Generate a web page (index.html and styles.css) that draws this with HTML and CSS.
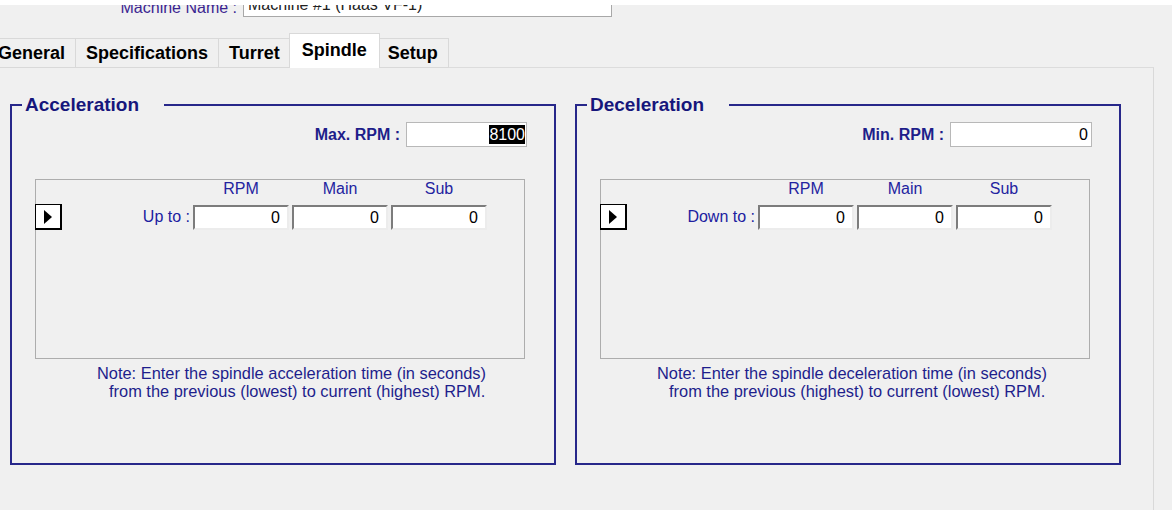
FILE: index.html
```html
<!DOCTYPE html>
<html>
<head>
<meta charset="utf-8">
<link rel="stylesheet" href="styles.css">
</head>
<body>
<div class="window">
  <div class="header">
    <span class="hdr-label">Machine Name :</span>
    <div class="hdr-input">Machine #1 (Haas VF-1)</div>
  </div>
  <div class="tabs">
    <div class="tab first">General</div>
    <div class="tab">Specifications</div>
    <div class="tab">Turret</div>
    <div class="tab active">Spindle</div>
    <div class="tab">Setup</div>
  </div>
  <div class="panel">
    <fieldset class="frame">
      <legend>Acceleration</legend>
      <div class="limit-row">
        <span class="limit-label">Max. RPM :</span>
        <div class="limit-input max"><span class="sel">8100</span></div>
      </div>
      <div class="table">
        <div class="col-head c3">RPM</div>
        <div class="col-head c4">Main</div>
        <div class="col-head c5">Sub</div>
        <div class="rowsel"><svg width="8" height="14" viewBox="0 0 8 14"><polygon points="0,0 8,7 0,14" fill="#000"/></svg></div>
        <div class="row-label">Up to :</div>
        <div class="cell">0</div>
        <div class="cell">0</div>
        <div class="cell">0</div>
      </div>
      <div class="note acc">
        <div>Note: Enter the spindle acceleration time (in seconds)</div>
        <div class="indent">from the previous (lowest) to current (highest) RPM.</div>
      </div>
    </fieldset>
    <fieldset class="frame">
      <legend>Deceleration</legend>
      <div class="limit-row">
        <span class="limit-label">Min. RPM :</span>
        <div class="limit-input min">0</div>
      </div>
      <div class="table">
        <div class="col-head c3">RPM</div>
        <div class="col-head c4">Main</div>
        <div class="col-head c5">Sub</div>
        <div class="rowsel"><svg width="8" height="14" viewBox="0 0 8 14"><polygon points="0,0 8,7 0,14" fill="#000"/></svg></div>
        <div class="row-label">Down to :</div>
        <div class="cell">0</div>
        <div class="cell">0</div>
        <div class="cell">0</div>
      </div>
      <div class="note dec">
        <div>Note: Enter the spindle deceleration time (in seconds)</div>
        <div class="indent">from the previous (highest) to current (lowest) RPM.</div>
      </div>
    </fieldset>
  </div>
</div>
</body>
</html>
```
FILE: styles.css
```css
* { box-sizing: border-box; }
html, body { margin: 0; padding: 0; background: #ffffff; }
body { font-family: "Liberation Sans", Arial, sans-serif; font-size: 16px; }

.window {
  margin-top: 5px;
  width: 1172px;
  height: 505px;
  background: #f0f0f0;
  overflow: hidden;
}

.header {
  display: flex;
  align-items: flex-end;
  margin-top: -12px;
  height: 24px;
}
.hdr-label {
  width: 237px;
  text-align: right;
  color: #3b2590;
  font-size: 16px;
  line-height: 18px;
  margin-right: 6px;
}
.hdr-input {
  width: 369px;
  height: 24px;
  background: #fff;
  border: 1px solid #a8a8a8;
  border-top: none;
  padding: 3px 0 0 4px;
  font-size: 16px;
  line-height: 18px;
  color: #222;
}

.tabs {
  display: flex;
  align-items: flex-end;
  height: 34px;
  margin-top: 17px;
  margin-left: -13px;
}
.tab {
  height: 30px;
  padding: 0 10px;
  border: 1px solid #d9d9d9;
  border-left: none;
  background: #f0f0f0;
  font-weight: bold;
  font-size: 18px;
  line-height: 28px;
  color: #000;
}
.tab.first { border-left: 1px solid #d9d9d9; }
.tab.active {
  position: relative;
  z-index: 1;
  height: 35px;
  margin: 0 -2px;
  padding: 2px 12px 0;
  background: #fff;
  border-left: 1px solid #d9d9d9;
  border-bottom: none;
  line-height: 28px;
}

.panel {
  margin-top: -1px;
  width: 1154px;
  height: 444px;
  border-top: 1px solid #dcdcdc;
  border-right: 1px solid #d9d9d9;
  padding: 26px 0 0 10px;
  display: flex;
  gap: 19px;
  align-items: flex-start;
}

.frame {
  margin: 0;
  padding: 0;
  width: 546px;
  height: 371px;
  border: 2px solid #27278a;
  min-width: 0;
}
.frame legend {
  margin-left: 10px;
  padding: 0 25px 0 3px;
  font-weight: bold;
  font-size: 19px;
  line-height: 22px;
  color: #16167c;
}

.limit-row {
  display: flex;
  justify-content: flex-end;
  align-items: center;
  margin-top: 6px;
  padding-right: 27px;
  gap: 6px;
}
.limit-label {
  font-weight: bold;
  font-size: 16px;
  color: #1e1e8a;
}
.limit-input {
  height: 25px;
  background: #fff;
  border: 1px solid #b8b8b8;
  text-align: right;
  font-size: 16px;
  line-height: 21px;
  color: #000;
}
.limit-input.max { width: 121px; padding: 1px 1px 0 0; }
.limit-input.min { width: 142px; padding: 1px 3px 0 0; }
.sel { background: #000; color: #fff; display: inline-block; line-height: 19px; }

.table {
  margin: 32px 0 0 23px;
  width: 490px;
  height: 180px;
  border: 1px solid #adadad;
  display: grid;
  grid-template-columns: 26px 125px 96px 96px 96px;
  grid-template-rows: 18px 26px;
  column-gap: 3px;
  row-gap: 6px;
  align-items: center;
  align-content: start;
}
.col-head {
  grid-row: 1;
  text-align: center;
  font-size: 16px;
  line-height: 18px;
  color: #2323a0;
}
.c3 { grid-column: 3; }
.c4 { grid-column: 4; }
.c5 { grid-column: 5; }

.rowsel {
  grid-row: 2;
  grid-column: 1;
  margin-left: -1px;
  width: 27px;
  height: 26px;
  background: #fff;
  border: 1px solid #000;
  border-right-width: 2px;
  border-bottom-width: 2px;
  display: flex;
  align-items: center;
  justify-content: center;
}
.row-label {
  grid-row: 2;
  text-align: right;
  font-size: 16px;
  color: #2020a0;
  white-space: nowrap;
}
.cell {
  grid-row: 2;
  height: 25px;
  background: #fff;
  border: 2px solid;
  border-color: #7c7c7c #ececec #ececec #7c7c7c;
  text-align: right;
  padding-right: 7px;
  font-size: 16px;
  line-height: 21px;
  color: #000;
}

.note {
  margin-top: 5px;
  font-size: 16.4px;
  line-height: 18px;
  color: #1e1e8c;
  white-space: nowrap;
}
.note.acc { padding-left: 85px; }
.note.dec { padding-left: 80px; }
.note .indent { padding-left: 12px; }
```
